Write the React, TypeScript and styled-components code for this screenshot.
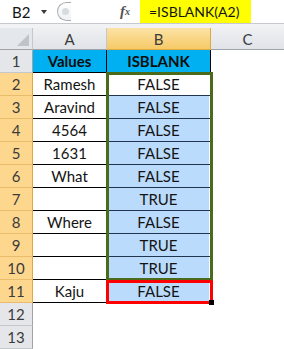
import styled, { createGlobalStyle } from "styled-components";

const GlobalStyle = createGlobalStyle`
  html, body {
    margin: 0;
    padding: 0;
    background: #ffffff;
  }
  * {
    box-sizing: border-box;
  }
`;

const rows: { a: string; b: string }[] = [
  { a: "Ramesh", b: "FALSE" },
  { a: "Aravind", b: "FALSE" },
  { a: "4564", b: "FALSE" },
  { a: "1631", b: "FALSE" },
  { a: "What", b: "FALSE" },
  { a: "", b: "TRUE" },
  { a: "Where", b: "FALSE" },
  { a: "", b: "TRUE" },
  { a: "", b: "TRUE" },
  { a: "Kaju", b: "FALSE" },
];

const App = () => {
  return (
    <StPage>
      <GlobalStyle />
      <StFormulaBar>
        <StNameBox>
          <StNameText>B2</StNameText>
          <StArrow />
        </StNameBox>
        <StSplitter>
          <StDot />
        </StSplitter>
        <StFx>
          f<sub>x</sub>
        </StFx>
        <StFormula>=ISBLANK(A2)</StFormula>
      </StFormulaBar>
      <StGap />
      <StSheet>
        <StCorner>
          <StTriangle />
        </StCorner>
        <StColHead>A</StColHead>
        <StColHead $active>B</StColHead>
        <StColHead $last>C</StColHead>

        <StRowHead>1</StRowHead>
        <StTitleCell>Values</StTitleCell>
        <StTitleCell>ISBLANK</StTitleCell>
        <StEmpty />

        {rows.map((r, i) => (
          <StRowGroup key={i}>
            <StRowHead $active>{i + 2}</StRowHead>
            <StCell>{r.a}</StCell>
            <StResult $plain={i === 0}>{r.b}</StResult>
            <StEmpty />
          </StRowGroup>
        ))}

        <StRowHead>12</StRowHead>
        <StEmpty />
        <StEmpty />
        <StEmpty />
        <StRowHead>13</StRowHead>
        <StEmpty />
        <StEmpty />
        <StEmpty />

        <StGreenBox />
        <StRedBox>
          <StHandle />
        </StRedBox>
      </StSheet>
    </StPage>
  );
};

export default App;

const StPage = styled.div`
  width: 284px;
  height: 349px;
  overflow: hidden;
  font-family: Lato, "Open Sans", sans-serif;
  color: #141414;
`;

const StFormulaBar = styled.div`
  display: flex;
  align-items: stretch;
  height: 24px;
  background: #ffffff;
  border-bottom: 1px solid #c6c9ce;
`;

const StNameBox = styled.div`
  display: flex;
  align-items: center;
  width: 56px;
  padding-left: 12px;
`;

const StNameText = styled.span`
  font-size: 15px;
  width: 29px;
`;

const StArrow = styled.span`
  width: 0;
  height: 0;
  border-left: 3.5px solid transparent;
  border-right: 3.5px solid transparent;
  border-top: 4px solid #3a3a3a;
  margin-top: 1px;
`;

const StSplitter = styled.div`
  position: relative;
  width: 14px;
  margin: 2px 0 2px 1px;
  border: 1px solid #a9adb3;
  border-right: none;
  border-radius: 11px 0 0 11px;
  background: linear-gradient(#ffffff, #eef0f2);
`;

const StDot = styled.span`
  position: absolute;
  left: 4px;
  top: 5px;
  width: 7px;
  height: 7px;
  border-radius: 50%;
  background: #d8dadd;
`;

const StFx = styled.div`
  display: flex;
  align-items: center;
  margin-left: 49px;
  width: 20px;
  font-family: "Liberation Serif", serif;
  font-style: italic;
  font-weight: bold;
  font-size: 15px;
  color: #555;

  sub {
    font-size: 10px;
    vertical-align: -2px;
  }
`;

const StFormula = styled.div`
  display: flex;
  align-items: center;
  width: 111px;
  padding-left: 9px;
  background: #ffff00;
  font-size: 14px;
  white-space: nowrap;
`;

const StGap = styled.div`
  height: 4px;
  background: #f1f2f4;
`;

const StSheet = styled.div`
  position: relative;
  display: grid;
  grid-template-columns: 33px 74px 104px 1fr;
  grid-template-rows: 22px repeat(13, 23px);
  font-size: 15px;
`;

const StRowGroup = styled.div`
  display: contents;
`;

const StCorner = styled.div`
  position: relative;
  background: #e4e7eb;
  border-right: 1px solid #c4c8cd;
  border-bottom: 1px solid #9fa3a8;
`;

const StTriangle = styled.span`
  position: absolute;
  right: 3px;
  bottom: 3px;
  width: 0;
  height: 0;
  border-left: 12px solid transparent;
  border-bottom: 12px solid #c0c3c7;
`;

const StColHead = styled.div<{ $active?: boolean; $last?: boolean }>`
  display: flex;
  align-items: center;
  justify-content: center;
  color: #3b3b3b;
  background: ${({ $active }) =>
    $active
      ? "linear-gradient(#fbe3a6, #f6c966)"
      : "linear-gradient(#eef0f2, #e0e3e8)"};
  border-right: 1px solid ${({ $active }) => ($active ? "#e0a93c" : "#c4c8cd")};
  border-bottom: 1px solid ${({ $active }) => ($active ? "#e0a93c" : "#9fa3a8")};
  ${({ $last }) => ($last ? "border-right: none;" : "")}
`;

const StRowHead = styled.div<{ $active?: boolean }>`
  display: flex;
  align-items: center;
  justify-content: center;
  color: #3b3b3b;
  background: ${({ $active }) => ($active ? "#fed78f" : "#e4e6ea")};
  border-right: 1px solid ${({ $active }) => ($active ? "#e0a93c" : "#9fa3a8")};
  border-bottom: 1px solid ${({ $active }) => ($active ? "#e9bd6b" : "#c4c8cd")};
`;

const StTitleCell = styled.div`
  display: flex;
  align-items: center;
  justify-content: center;
  background: #00b0f0;
  font-weight: bold;
  color: #0d0d0d;
  border-right: 1px solid #000;
  border-bottom: 1px solid #000;
`;

const StCell = styled.div`
  display: flex;
  align-items: center;
  justify-content: center;
  background: #fff;
  border-right: 1px solid #000;
  border-bottom: 1px solid #000;
`;

const StResult = styled.div<{ $plain?: boolean }>`
  display: flex;
  align-items: center;
  justify-content: center;
  background: ${({ $plain }) => ($plain ? "#ffffff" : "#bbdbfc")};
  border-right: 1px solid #000;
  border-bottom: 1px solid #1f3550;
  box-shadow: inset 1px 0 0 #fff, inset -1px 0 0 #fff;
`;

const StEmpty = styled.div`
  background: #fff;
`;

const StGreenBox = styled.div`
  position: absolute;
  grid-column: 3 / 4;
  grid-row: 3 / 12;
  top: -1px;
  bottom: -1px;
  left: -1px;
  right: -2px;
  border: 3px solid #4a6a1c;
  pointer-events: none;
`;

const StRedBox = styled.div`
  position: absolute;
  grid-column: 3 / 4;
  grid-row: 12 / 13;
  top: 0;
  bottom: -1px;
  left: -1px;
  right: -2px;
  border: 3px solid #ff0000;
  pointer-events: none;
`;

const StHandle = styled.span`
  position: absolute;
  right: -4px;
  bottom: -4px;
  width: 5px;
  height: 5px;
  background: #000;
`;
